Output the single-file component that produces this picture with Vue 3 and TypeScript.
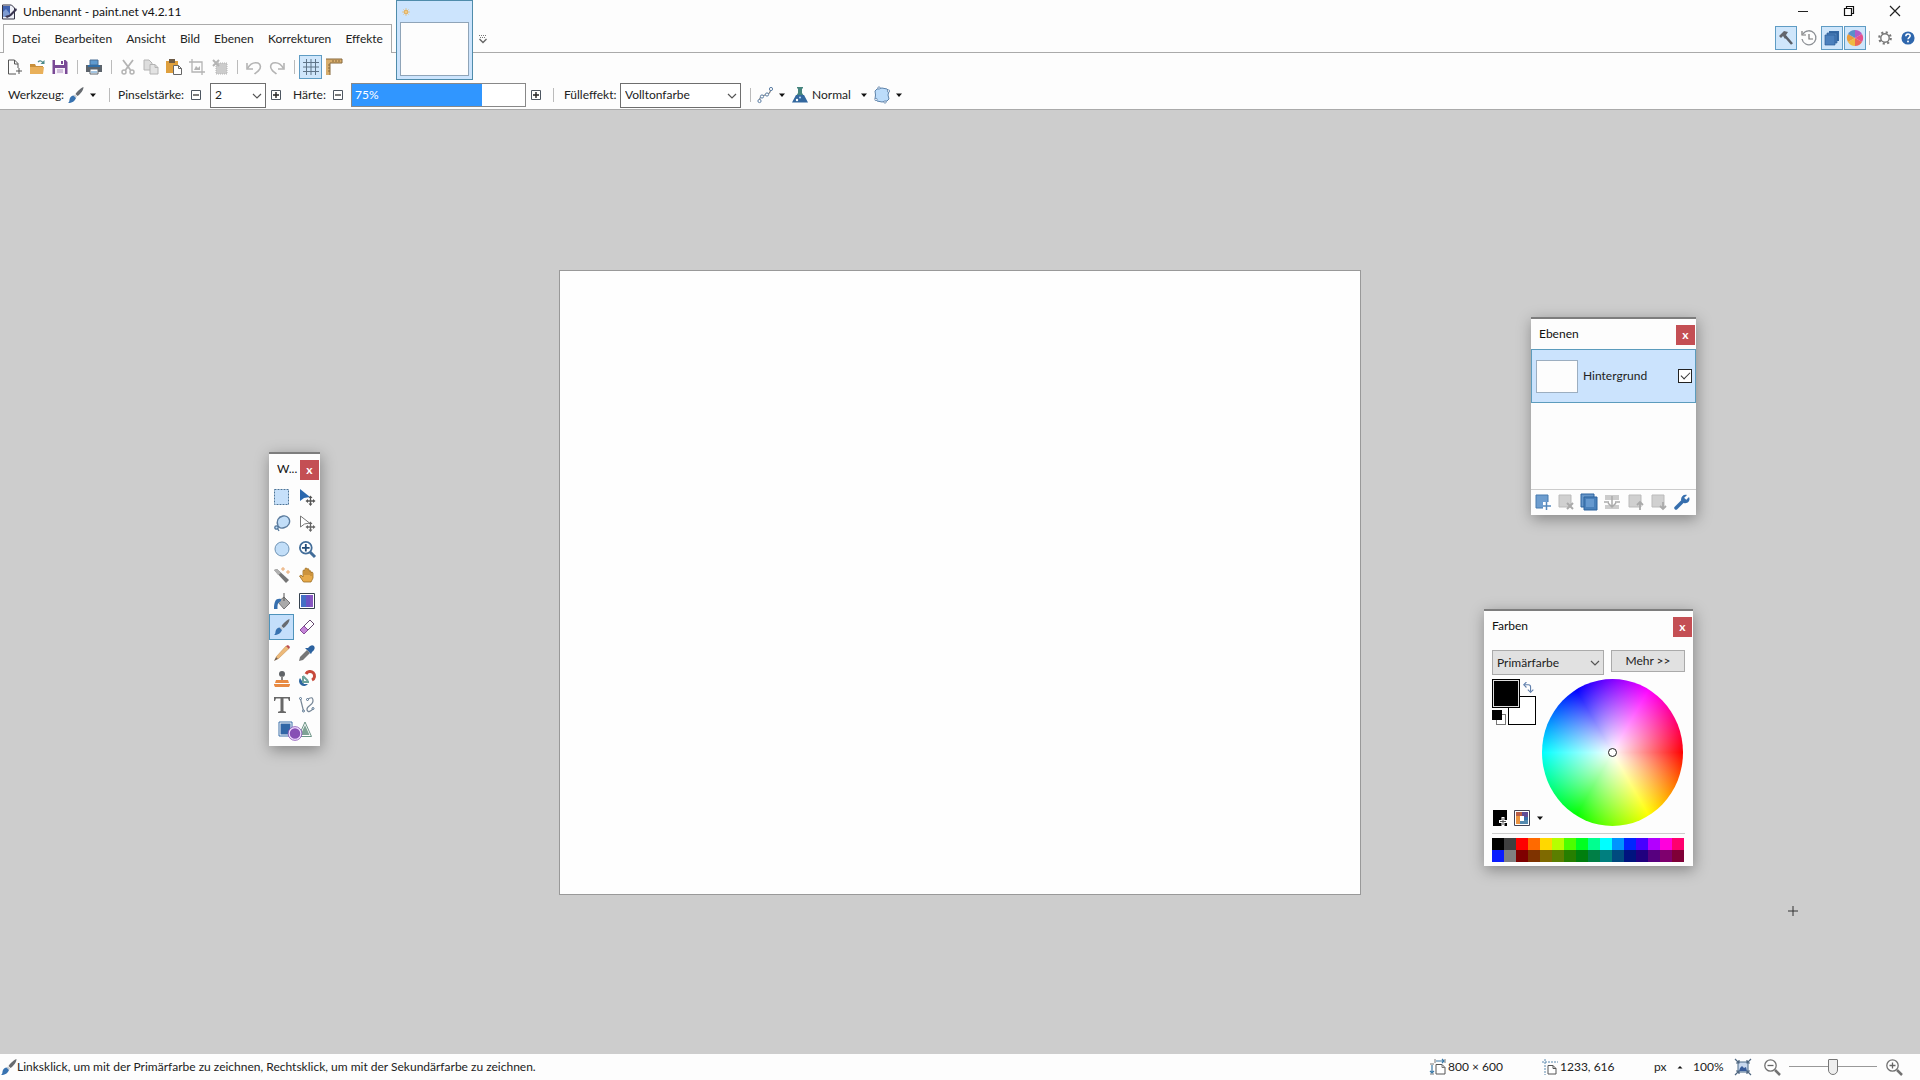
<script setup lang="ts">
import { ref } from 'vue'

const g = '#b4b4b4'
const icons: Record<string, string> = {
  app: '<path d="M1.5 1h9l3 3v11h-12z" fill="#eef0f8" stroke="#334"/><path d="M2 2h7v8H2z" fill="#3f62b0"/><path d="M2 8l3-3 4 5v3H2z" fill="#7e9bd2"/><path d="M15 4L8 11l-4 1 2 2 4-2 6-6z" fill="#3a3550"/>',
  new: '<path d="M12 9V4.500L8.500 1H2.500v14H10" fill="none" stroke="#555"/><path d="M8.500 1v4H12M13 9v6M10 12h6" fill="none" stroke="#555"/>',
  open: '<path d="M1 5h5l1 2h7v8H1z" fill="#c88f3a"/><path d="M1 8h14l-1 7H1z" fill="#e9b05a"/><path d="M9 3c2-2 4-1 5 1" fill="none" stroke="#4d8a8a" stroke-width="1.200"/><path d="M15.500 1v4h-4z" fill="#4d8a8a"/>',
  save: '<path d="M.5 1h13l2 2v12H.5z" fill="#7a4a96"/><path d="M3 1h9v5H3z" fill="#fff"/><path d="M9 2h2v3H9z" fill="#7a4a96"/><path d="M3 9h10v6H3z" fill="#f8f2fb"/><path d="M5 11h6M5 13h6" stroke="#a98bbb"/>',
  print: '<path d="M4 1h8v5H4z" fill="#5f9bd0" stroke="#4a6f94"/><path d="M0 6h16v7H0z" fill="#5d646c"/><path d="M2 6h12v2H2z" fill="#2f6ea8"/><path d="M4 10h8v5H4z" fill="#fff" stroke="#5d646c"/><path d="M5 13h6" stroke="#4a8bc4"/>',
  cut: `<path d="M3 1l7.500 10M13 1L5.500 11" stroke="${g}" stroke-width="1.800"/><circle cx="4" cy="13" r="2" fill="none" stroke="${g}" stroke-width="1.500"/><circle cx="12" cy="13" r="2" fill="none" stroke="${g}" stroke-width="1.500"/>`,
  copy: `<path d="M1 1h5l3 3v7H1z" fill="#ddd" stroke="${g}"/><path d="M7 5.500h5l3 3V15H7z" fill="#e3e3e3" stroke="${g}"/><path d="M12 5.500v3h3" fill="none" stroke="${g}"/>`,
  paste: '<path d="M0 2h12v12H0z" fill="#dfa03e"/><path d="M3 0h6v4H3z" fill="#6d5a44"/><path d="M7.500 6.500h5l3 3v6h-8z" fill="#fff" stroke="#666"/><path d="M12.500 6.500v3h3" fill="none" stroke="#666"/>',
  crop: `<path d="M3 0v13h13M0 3h13v13" fill="none" stroke="${g}" stroke-width="1.300"/><path d="M5 11l2-4 2 2 2-2v4z" fill="${g}"/>`,
  deselect: `<path d="M4 4h11v11H4z" fill="#ccc" stroke="${g}" stroke-dasharray="1 1"/><path d="M1 1l6 6M7 1L1 7" stroke="${g}" stroke-width="2"/>`,
  undo: `<path d="M1.500 9.500C4 5 8 3 12 4c3 1 3 5 1 7-1 1.500-3 2.500-4.500 4" fill="none" stroke="${g}" stroke-width="1.600"/><path d="M1 4v6h6" fill="none" stroke="${g}" stroke-width="1.600"/>`,
  redo: `<path d="M14.500 9.500C12 5 8 3 4 4 1 5 1 9 3 11c1 1.500 3 2.500 4.500 4" fill="none" stroke="${g}" stroke-width="1.600"/><path d="M15 4v6H9" fill="none" stroke="${g}" stroke-width="1.600"/>`,
  grid: '<path d="M3.500 0v16M8 0v16M12.500 0v16M0 3.500h16M0 8h16M0 12.500h16" stroke="#5f7488"/>',
  ruler: '<path d="M0 0h16v4H4v12H0z" fill="#d8ad6c"/><path d="M0 0h16v4M4 16V4h12M4 6H2m2 3H2m2 3H2M7 3V1m3 2V1m3 2V1" fill="none" stroke="#86683c"/>',
  brush: '<path d="M15.500 0c-3 1-7 5-8 7l2 2c3-2 6-6 6-9z" fill="#676b70"/><path d="M7 7.500L9 9.500 8 11 5.500 8.500z" fill="#c9ccd0"/><path d="M5.500 8.500L8 11c-1 3-4 5-8 5 2-1 1-3 2-5 .8-1.500 2-2.500 3.500-2.500z" fill="#3772b0"/>',
  minus: '<path d="M3.500 3.500h9v9h-9z" fill="#fff" stroke="#4d5661"/><path d="M5 8h6" stroke="#222" stroke-width="1.200"/>',
  plus: '<path d="M3.500 3.500h9v9h-9z" fill="#fff" stroke="#4d5661"/><path d="M5 8h6M8 5v6" stroke="#222" stroke-width="1.400"/>',
  curve: '<path d="M2.500 13C3 8 6 9 8 8s5 0 5.500-5" fill="none" stroke="#777" stroke-width="1.200"/><g fill="#fff" stroke="#5c7ea4"><circle cx="2.500" cy="14" r="1.600"/><circle cx="5" cy="9.500" r="1.600"/><circle cx="10" cy="7.500" r="1.600"/><circle cx="14" cy="2" r="1.600"/></g>',
  flask: '<path d="M5 0h6v1.500h-1V6l2 3H4l2-3V1.500H5z" fill="#45847d"/><path d="M4 8h8l4 7.500H0z" fill="#33689f"/><circle cx="5" cy="13" r="1.200" fill="#fff"/><circle cx="8" cy="10.500" r="1" fill="#b9dafa"/>',
  blob: '<path d="M3 2q5-2 10 0 1 1 2 2-2 4 0 8l-2 2q-5 2-10 0l-2-2Q2 8 1 4z" fill="#bcdcfa" stroke="#5d82a9"/><g fill="#fff" stroke="#5d82a9" stroke-width=".8"><circle cx="5" cy="1" r="1.200"/><circle cx="14.500" cy="4" r="1.200"/><circle cx="2" cy="12.500" r="1.200"/><circle cx="11" cy="15" r="1.200"/></g>',
  hammer: '<path d="M1 6l5-5 4 1-2 3 1 2-2 2-2-3-2 2z" fill="#63666c"/><path d="M7.500 6.500l6.500 7.500" stroke="#5b6069" stroke-width="2.600"/>',
  clock: '<path d="M2 4a7 7 0 1 1-1 5" fill="none" stroke="#8b8f94" stroke-width="1.300"/><path d="M1 1v4h4M8 4v5h4" fill="none" stroke="#777" stroke-width="1.200"/>',
  layers: '<path d="M5 1h10v10H5z" fill="#3468a4"/><path d="M3 3h10v10H3z" fill="#4b7fb9" stroke="#2b5c98" stroke-width=".7"/><path d="M1 5h10v10H1z" fill="#4b80bd" stroke="#2b5c98" stroke-width=".7"/>',
  colors: '<path d="M8 8V0a8 8 0 0 1 7 4z" fill="#b15cc6"/><path d="M8 8l7-4a8 8 0 0 1 0 8z" fill="#e54f8d"/><path d="M8 8l7 4a8 8 0 0 1-7 4z" fill="#ed6757"/><path d="M8 8v8a8 8 0 0 1-7-4z" fill="#efba42"/><path d="M8 8l-7 4a8 8 0 0 1 0-8z" fill="#eb9b39"/><path d="M8 8L1 4a8 8 0 0 1 7-4z" fill="#588fc9"/>',
  gear: '<circle cx="8" cy="8" r="4.800" fill="none" stroke="#777" stroke-width="1.600"/><circle cx="8" cy="8" r="6.600" fill="none" stroke="#777" stroke-width="2.400" stroke-dasharray="2.400 2.784"/>',
  help: '<circle cx="8" cy="8" r="7.500" fill="#2f67ad"/><path d="M5.500 6c0-3.500 5-3.500 5-.5 0 2-2.500 2-2.500 4" fill="none" stroke="#fff" stroke-width="1.700"/><circle cx="8" cy="12" r="1.100" fill="#fff"/>',
  rect: '<path d="M.5 .5h14v15H.5z" fill="#c6e0fa"/><path d="M.5 .5h14v15H.5z" fill="none" stroke="#4c7499" stroke-dasharray="2 1"/>',
  move: '<path d="M1 0v12l4-3 6-1z" fill="#2b68ae"/><path d="M11.500 8v8M8 12h7" stroke="#555" stroke-width="1.300"/><path d="M11.500 6.500l2 2.500h-4zm0 10.500l2-2.500h-4zM6.500 12L9 10v4zm10 0L14 10v4z" fill="#555"/>',
  movesel: '<path d="M1.500 1v11l4-3 5-1z" fill="#fff" stroke="#777"/><path d="M11.500 8v8M8 12h7" stroke="#666" stroke-width="1.300"/><path d="M11.500 6.500l2 2.500h-4zm0 10.500l2-2.500h-4zM6.500 12L9 10v4zm10 0L14 10v4z" fill="#666"/>',
  lasso: '<path d="M4 11C2 6 4 2 9 1s8 4 6 8-8 5-10 3z" fill="#c2def8" stroke="#5c7c9e" stroke-width="1.300"/><circle cx="2.500" cy="12.500" r="1.700" fill="#c2def8" stroke="#50759a" stroke-width="1.300"/><path d="M3.500 13.500L5 16" stroke="#50759a" stroke-width="1.300"/>',
  ellipse: '<circle cx="8" cy="8" r="7" fill="#c2def8" stroke="#6e93b5"/>',
  zoom: '<circle cx="6.800" cy="6.800" r="5.900" fill="#fff" stroke="#426d99" stroke-width="1.800"/><path d="M11 11l5 5" stroke="#426d99" stroke-width="3"/><path d="M6.800 3v7.600M3 6.800h7.600" stroke="#234c78" stroke-width="1.800"/>',
  wand: '<path d="M0 3l3-1 12 11-3 3z" fill="#757575"/><path d="M0 3l3-1 4 4-3 2z" fill="#b0b0b0"/><path d="M9 0v4M7 2h4M14 3v4M12 5h4" stroke="#e9a86f"/>',
  hand: '<path d="M4.500 15L.5 9 2 8l2 2V3.500q1-1 2 0V1.500q1-1 2 0v.5q2-1 2 1v1q2-1 2 1v.5q2-1 2 1V11l-2 4z" fill="#e7aa4a" stroke="#9b6c25" stroke-width=".8"/><path d="M6 3.500V8M8 2v6M10 3.500V8M12 5v4" stroke="#9b6c25" stroke-width=".7"/>',
  bucket: '<path d="M4 9l6-5 6 6-6 6z" fill="#aaa" stroke="#777"/><path d="M10 0v8" stroke="#555"/><path d="M7 6C2 5 0 8 0 16h3.500c0-5 0-6 3.500-8z" fill="#366fae"/>',
  gradient: '<path d="M.5.500h15v15H.5z" fill="#fff" stroke="#34414f"/><path d="M2 2h12v12H2z" fill="#6b54c4"/><path d="M2 2h5v12H2z" fill="#436fc5"/><path d="M11 2h3v12h-3z" fill="#8857c2"/>',
  eraser: '<path d="M1 11L11 1l4 4L5 15z" fill="#fff" stroke="#65486f"/><path d="M1 11l4-4 4 4-4 4z" fill="#c485d7" stroke="#874b9b"/>',
  pencil: '<path d="M2 12L12 1l3 2.500L4 14z" fill="#edb979" stroke="#bf8a4c" stroke-width=".5"/><path d="M12 1l2-1 2 2-1 2z" fill="#bb4c50"/><path d="M2 12l2 2-4 2z" fill="#765e48"/>',
  picker: '<path d="M9 3q3-4 6-2 2 3-2 6l-1 2-6-6z" fill="#2c629f"/><path d="M8 5l3 3-7 7-4 1 1-4z" fill="#777"/>',
  stamp: '<circle cx="8" cy="3" r="3" fill="#606468"/><path d="M7 5h2v4H7z" fill="#888"/><path d="M2 9h12l1 3H1zM0 13h16v1l-1 2H1l-1-2z" fill="#e88a42"/>',
  recolor: '<path d="M1 7a5 5 0 1 0 8 6l-4 0z" fill="#2e67a0"/><path d="M7 3a4.500 4.500 0 1 1 6 6" fill="none" stroke="#c7493b" stroke-width="3"/><path d="M4 5v6h6M9 10L4 5" fill="none" stroke="#6ca29b" stroke-width="2"/>',
  text: '<path d="M0 0h16v4h-1l-1-2.500H9.500V14l2.500.8V16H4v-1.200l2.500-.8V1.500H2L1 4H0z" fill="#686868"/>',
  line: '<path d="M1.500 2l3 12M8 3q6-5 6 1c0 5-7 4-6 9 1 3 4 1 6-1" fill="none" stroke="#778797" stroke-width="1.200"/><g fill="#fff" stroke="#55728f"><circle cx="1.500" cy="1.500" r="1"/><circle cx="4.500" cy="14" r="1"/><circle cx="8.500" cy="2.500" r="1"/><circle cx="14" cy="11.500" r="1"/></g>',
  shapes: '<path d="M1 1h13v14H1z" fill="#fff" stroke="#3a6ea8"/><path d="M2.500 2.500h10v11h-10z" fill="#3267a7"/><path d="M27 1l6.500 14.500h-13z" fill="#fff" stroke="#6c9486"/><path d="M27 4l4.500 10h-9z" fill="#7fa395"/><circle cx="17" cy="12.500" r="6" fill="#874fb5" stroke="#f0ddff" stroke-width="1.500"/><circle cx="17" cy="12.500" r="6.900" fill="none" stroke="#874fb5" stroke-width=".8"/>',
  addlayer: '<path d="M1 1h12v13H1z" fill="#6d9dcf" stroke="#477aaf"/><path d="M8 8h8v8H8z" fill="#fff"/><path d="M11.500 8v8M8 12h8" stroke="#5689bd" stroke-width="1.500"/>',
  dellayer: '<path d="M1 1h12v12H1z" fill="#d0d0d0" stroke="#bbb"/><path d="M9 9l6 6M15 9l-6 6" stroke="#aaa" stroke-width="2"/>',
  duplayer: '<path d="M0 0h13v13H0z" fill="#6797ca" stroke="#2c629d"/><path d="M3 3h13v13H3z" fill="#4980ba" stroke="#2c629d"/><path d="M5 5h8v8H5z" fill="#6699cf"/>',
  merge: '<path d="M1 1h14v5H1zM1 11h14v4H1z" fill="#ccc"/><path d="M8 2v11M4 9l4 4 4-4M0 8h5M11 8h5" fill="none" stroke="#aaa" stroke-width="1.500"/>',
  up: '<path d="M1 1h12v12H1z" fill="#d0d0d0" stroke="#bbb"/><path d="M12 16V9M9 11l3-3 3 3" fill="none" stroke="#aaa" stroke-width="1.800"/>',
  down: '<path d="M1 1h12v12H1z" fill="#d0d0d0" stroke="#bbb"/><path d="M12 8v7M9 12l3 3 3-3" fill="none" stroke="#aaa" stroke-width="1.800"/>',
  wrench: '<path d="M2 14l8-8" stroke="#376fae" stroke-width="3.500" stroke-linecap="round"/><path d="M10 9L7 6c0-4 3-6 6-5l-3 3 2 2 3-3c2 4-2 7-5 6z" fill="#376fae"/>',
  swap: '<path d="M2 4h6q3 0 3 3v7" fill="none" stroke="#607fac" stroke-width="1.600"/><path d="M5 0L1 4l4 4M7 11l4 4 4-4" fill="none" stroke="#607fac" stroke-width="1.600"/>',
  addcolor: '<path d="M1 0h14v16H1z" fill="#000"/><path d="M11 7v9M7 11.500h9" stroke="#fff" stroke-width="3"/><path d="M11 8v7M8 11.500h6" stroke="#555"/>',
  palette: '<path d="M.5.500h15v15H.5z" fill="#fff" stroke="#445"/><path d="M2 2h6v4H2z" fill="#ba5e46"/><path d="M8 2h6v6H8z" fill="#614c95"/><path d="M2 6h4v8H2z" fill="#ec9441"/><path d="M6 10h8v4H6z" fill="#5489ae"/><path d="M10 7h4v3h-4z" fill="#386eaa"/><path d="M6 6h4v5H6z" fill="#fff"/>',
  size: '<path d="M6 5.500h6l3 3V15H6z" fill="#fff" stroke="#555"/><path d="M12 5.500v3h3M0 5h4M0 15h4M5 0v4M15 0v4" fill="none" stroke="#777"/><path d="M2 6v8M0 12l2 2 2-2M6 2h8M12 0l2 2-2 2" fill="none" stroke="#3979a8" stroke-width="1.200"/>',
  pos: '<path d="M3 0v16M0 3h16" stroke="#5a88ad" stroke-dasharray="2 1"/><path d="M6 6.500h5l3 3V15H6z" fill="#fff" stroke="#555"/><path d="M11 6.500v3h3" fill="none" stroke="#555"/>',
  fit: '<path d="M3 3h10v10H3z" fill="#c8d8ee" stroke="#496988"/><path d="M4 12l1-3 2-2 2 2 2-1 1 4z" fill="#365a99"/><path d="M0 0l4 4M16 0l-4 4M0 16l4-4M16 16l-4-4M1 4h3V1M12 1v3h3M1 12h3v3M12 15v-3h3" fill="none" stroke="#4e6680" stroke-width="1.200"/>',
  zoomout: '<circle cx="6.500" cy="6.500" r="5.700" fill="#fff" stroke="#727272" stroke-width="1.300"/><path d="M11 11l5 5" stroke="#727272" stroke-width="2.500"/><path d="M3.500 6.500h6" stroke="#666" stroke-width="1.300"/>',
  zoomin: '<circle cx="6.500" cy="6.500" r="5.700" fill="#fff" stroke="#727272" stroke-width="1.300"/><path d="M11 11l5 5" stroke="#727272" stroke-width="2.500"/><path d="M3.500 6.500h6M6.500 3.500v6" stroke="#666" stroke-width="1.300"/>',
  min: '<path d="M3 8.500h10" stroke="#222"/>',
  restore: '<path d="M3.500 5.500h7v7h-7zM5.500 5V3.500h7v7H11" fill="none" stroke="#111" stroke-width="1.200"/>',
  close: '<path d="M3 3l10 10M13 3L3 13" stroke="#222" stroke-width="1.200"/>',
  caret: '<path d="M5 6.500h6L8 10z" fill="#111"/>',
  caretup: '<path d="M5.500 9.500h5L8 7z" fill="#111"/>',
  doclist: '<path d="M4.500 8L8 11.500 11.500 8" fill="none" stroke="#666" stroke-width="1.400"/><path d="M4 4.500h8M5 6.500h6" stroke="#777" stroke-dasharray="1 1"/>',
  star: '<path d="M8 2v12M2 8h12M4 4l8 8M12 4l-8 8" stroke="#e9b45e" stroke-width="1.300"/><circle cx="8" cy="8" r="2.500" fill="#f8d28c" stroke="#dc9d3e"/>',
  chevron: '<path d="M4 6l4 4 4-4" fill="none" stroke="#555" stroke-width="1.200"/>',
  cross: '<path d="M8 3v10M3 8h10" stroke="#333"/>',
}

const menus = ['Datei', 'Bearbeiten', 'Ansicht', 'Bild', 'Ebenen', 'Korrekturen', 'Effekte']
const toolbar = ['new', 'open', 'save', '|', 'print', '|', 'cut', 'copy', 'paste', 'crop', 'deselect', '|', 'undo', 'redo', '|', 'grid', 'ruler']
const tools = ['rect', 'move', 'lasso', 'movesel', 'ellipse', 'zoom', 'wand', 'hand', 'bucket', 'gradient', 'brush', 'eraser', 'pencil', 'picker', 'stamp', 'recolor', 'text', 'line']
const layerActions = ['addlayer', 'dellayer', 'duplayer', 'merge', 'up', 'down', 'wrench']
const swatches = [
  '#000000', '#404040', '#ff0000', '#ff6a00', '#ffd800', '#b6ff00', '#4cff00', '#00ff21', '#00ff90', '#00ffff', '#0094ff', '#0026ff', '#4800ff', '#b200ff', '#ff00dc', '#ff006e',
  '#0a1cff', '#808080', '#7f0000', '#7f3300', '#7f6a00', '#5b7f00', '#267f00', '#007f0e', '#007f46', '#007f7f', '#004a7f', '#00137f', '#21007f', '#57007f', '#7f006e', '#7f0037',
]

const tool = ref('brush')
const brushSize = ref('2')
const hardness = ref(75)
const fill = ref('Volltonfarbe')
const slot = ref('Primärfarbe')
const layerVisible = ref(true)
const zoomLevel = ref(50)
</script>

<template>
  <div class="app">
    <header class="top">
      <div class="titlebar">
        <svg class="icon" viewBox="0 0 16 16" v-html="icons.app" />
        <h1>Unbenannt - paint.net v4.2.11</h1>
        <div class="window-buttons">
          <button v-for="n in ['min', 'restore', 'close']" :key="n" :aria-label="n">
            <svg class="icon" viewBox="0 0 16 16" v-html="icons[n]" />
          </button>
        </div>
      </div>

      <div class="menurow">
        <nav class="menu">
          <button v-for="m in menus" :key="m">{{ m }}</button>
        </nav>
        <button class="doclist" aria-label="Bilderliste"><svg class="icon" viewBox="0 0 16 16" v-html="icons.doclist" /></button>
        <div class="panels">
          <button class="tb on" aria-label="Werkzeuge"><svg class="icon" viewBox="0 0 16 16" v-html="icons.hammer" /></button>
          <button class="tb" aria-label="Verlauf"><svg class="icon" viewBox="0 0 16 16" v-html="icons.clock" /></button>
          <button class="tb on" aria-label="Ebenen"><svg class="icon" viewBox="0 0 16 16" v-html="icons.layers" /></button>
          <button class="tb on" aria-label="Farben"><svg class="icon" viewBox="0 0 16 16" v-html="icons.colors" /></button>
          <span class="sep" />
          <button class="tb" aria-label="Einstellungen"><svg class="icon small" viewBox="0 0 16 16" v-html="icons.gear" /></button>
          <button class="tb" aria-label="Hilfe"><svg class="icon small" viewBox="0 0 16 16" v-html="icons.help" /></button>
        </div>
      </div>

      <div class="toolbar">
        <template v-for="(n, i) in toolbar" :key="i">
          <span v-if="n === '|'" class="sep" />
          <button v-else class="tb" :class="{ on: n === 'grid' }" :aria-label="n">
            <svg class="icon" viewBox="0 0 16 16" v-html="icons[n]" />
          </button>
        </template>
      </div>

      <div class="options">
        <span class="l-tool">Werkzeug:</span>
        <button class="pick" aria-label="Werkzeug">
          <svg class="icon" viewBox="0 0 16 16" v-html="icons.brush" />
          <svg class="icon" viewBox="0 0 16 16" v-html="icons.caret" />
        </button>
        <span class="sep" />
        <label class="l-size" for="size">Pinselstärke:</label>
        <button class="step" aria-label="Kleiner"><svg class="icon" viewBox="0 0 16 16" v-html="icons.minus" /></button>
        <span class="select size">
          <select id="size" v-model="brushSize"><option>2</option><option>3</option></select>
          <svg class="icon" viewBox="0 0 16 16" v-html="icons.chevron" />
        </span>
        <button class="step" aria-label="Größer"><svg class="icon" viewBox="0 0 16 16" v-html="icons.plus" /></button>
        <label class="l-hard" for="hard">Härte:</label>
        <button class="step" aria-label="Weicher"><svg class="icon" viewBox="0 0 16 16" v-html="icons.minus" /></button>
        <span class="hardness">
          <span class="fill" :style="{ width: hardness + '%' }" />
          <input id="hard" v-model="hardness" type="range" min="0" max="100">
          <output for="hard">{{ hardness }}%</output>
        </span>
        <button class="step" aria-label="Härter"><svg class="icon" viewBox="0 0 16 16" v-html="icons.plus" /></button>
        <span class="sep wide" />
        <label class="l-fill" for="fill">Fülleffekt:</label>
        <span class="select fillsel">
          <select id="fill" v-model="fill"><option>Volltonfarbe</option></select>
          <svg class="icon" viewBox="0 0 16 16" v-html="icons.chevron" />
        </span>
        <span class="sep wide" />
        <button class="pick" aria-label="Kantenglättung">
          <svg class="icon" viewBox="0 0 16 16" v-html="icons.curve" />
          <svg class="icon" viewBox="0 0 16 16" v-html="icons.caret" />
        </button>
        <button class="pick blend">
          <svg class="icon" viewBox="0 0 16 16" v-html="icons.flask" />
          <span>Normal</span>
          <svg class="icon" viewBox="0 0 16 16" v-html="icons.caret" />
        </button>
        <button class="pick" aria-label="Auswahlmodus">
          <svg class="icon" viewBox="0 0 16 16" v-html="icons.blob" />
          <svg class="icon" viewBox="0 0 16 16" v-html="icons.caret" />
        </button>
      </div>

      <button class="doc-tab" aria-label="Unbenannt">
        <svg class="star" viewBox="0 0 16 16" v-html="icons.star" />
        <span class="doc-thumb" />
      </button>
    </header>

    <main class="workspace">
      <div class="canvas" />

      <section class="win tools">
        <div class="win-title"><h2>W...</h2><button class="x" aria-label="Schließen">x</button></div>
        <div class="tool-grid">
          <button v-for="t in tools" :key="t" :class="{ on: tool === t }" :aria-label="t" @click="tool = t">
            <svg class="icon" viewBox="0 0 16 16" v-html="icons[t]" />
          </button>
          <button class="wide" aria-label="shapes"><svg class="shapes" viewBox="0 0 34 20" v-html="icons.shapes" /></button>
        </div>
      </section>

      <section class="win layers">
        <div class="win-title"><h2>Ebenen</h2><button class="x" aria-label="Schließen">x</button></div>
        <label class="layer">
          <span class="layer-thumb" />
          <span class="layer-name">Hintergrund</span>
          <input v-model="layerVisible" type="checkbox">
        </label>
        <div class="layer-space" />
        <div class="layer-actions">
          <button v-for="a in layerActions" :key="a" :aria-label="a"><svg class="icon" viewBox="0 0 16 16" v-html="icons[a]" /></button>
        </div>
      </section>

      <section class="win colors">
        <div class="win-title"><h2>Farben</h2><button class="x" aria-label="Schließen">x</button></div>
        <div class="color-head">
          <span class="select slot">
            <select v-model="slot" aria-label="Farbe"><option>Primärfarbe</option><option>Sekundärfarbe</option></select>
            <svg class="icon" viewBox="0 0 16 16" v-html="icons.chevron" />
          </span>
          <button class="more">Mehr &gt;&gt;</button>
        </div>
        <div class="color-body">
          <div class="color-left">
            <div class="wells">
              <span class="secondary" />
              <span class="primary" />
              <span class="mini-white" />
              <span class="mini-black" />
              <svg class="swap" viewBox="0 0 16 16" v-html="icons.swap" />
            </div>
            <div class="color-tools">
              <button aria-label="Farbe hinzufügen"><svg class="icon" viewBox="0 0 16 16" v-html="icons.addcolor" /></button>
              <button class="pal" aria-label="Palette">
                <svg class="icon" viewBox="0 0 16 16" v-html="icons.palette" />
                <svg class="icon" viewBox="0 0 16 16" v-html="icons.caret" />
              </button>
            </div>
          </div>
          <div class="wheel"><span class="marker" /></div>
        </div>
        <div class="swatches">
          <span v-for="(c, i) in swatches" :key="i" :style="{ background: c }" />
        </div>
      </section>

      <svg class="cursor" viewBox="0 0 16 16" v-html="icons.cross" />
    </main>

    <footer class="status">
      <svg class="icon" viewBox="0 0 16 16" v-html="icons.brush" />
      <span class="hint">Linksklick, um mit der Primärfarbe zu zeichnen, Rechtsklick, um mit der Sekundärfarbe zu zeichnen.</span>
      <svg class="icon" viewBox="0 0 16 16" v-html="icons.size" />
      <span class="s-size">800 × 600</span>
      <svg class="icon" viewBox="0 0 16 16" v-html="icons.pos" />
      <span class="s-pos">1233, 616</span>
      <button class="unit">px <svg class="icon" viewBox="0 0 16 16" v-html="icons.caretup" /></button>
      <span class="s-zoom">100%</span>
      <button class="fit" aria-label="Einpassen"><svg class="icon" viewBox="0 0 16 16" v-html="icons.fit" /></button>
      <button aria-label="Verkleinern"><svg class="icon" viewBox="0 0 16 16" v-html="icons.zoomout" /></button>
      <input v-model="zoomLevel" class="zoom" type="range" min="0" max="100" aria-label="Zoom">
      <button aria-label="Vergrößern"><svg class="icon" viewBox="0 0 16 16" v-html="icons.zoomin" /></button>
    </footer>
  </div>
</template>

<style>
body { margin: 0; overflow: hidden; }
</style>

<style scoped>
.app {
  display: flex;
  flex-direction: column;
  height: 100vh;
  background: #fdfdfd;
  color: #222;
  font: 12px/16px Lato, "Open Sans", sans-serif;
}
.app *, .app *::before { box-sizing: border-box; }
button {
  display: flex;
  align-items: center;
  justify-content: center;
  padding: 0;
  border: 0;
  background: none;
  color: inherit;
  font: inherit;
  white-space: nowrap;
}
h1, h2 { margin: 0; font: inherit; color: #111; }
.icon { flex: none; display: block; width: 16px; height: 16px; overflow: visible; }
.icon.small { width: 14px; height: 14px; }
.sep { flex: none; width: 11px; height: 14px; }
.sep::before { content: ""; display: block; width: 1px; height: 14px; margin-left: 6px; background: #bbb; }

.top { position: relative; flex: none; border-bottom: 1px solid #aaa; }
.titlebar { display: flex; align-items: center; height: 24px; padding-left: 1px; }
.titlebar h1 { margin-left: 6px; }
.window-buttons { display: flex; margin-left: auto; padding-right: 2px; align-self: flex-start; }
.window-buttons button { width: 46px; height: 21px; }

.menurow { display: flex; height: 29px; box-shadow: inset 0 -1px #aaa; padding-left: 3px; }
.menu {
  display: flex;
  justify-content: space-between;
  width: 389px;
  padding: 0 8px;
  border: 1px solid #aaa;
  border-bottom: 0;
  background: #fdfdfd;
}
.doclist { width: 16px; margin-left: 83px; }
.panels { display: flex; align-items: center; gap: 1px; margin-left: auto; padding: 0 1px 2px 0; }
.panels .sep { width: 6px; }
.panels .sep::before { margin-left: 2px; }
.tb { flex: none; width: 23px; height: 24px; border: 1px solid transparent; }
.panels .tb { width: 22px; }
.tb.on { background: #cfe6fb; border-color: #5f9cc4; }

.toolbar { display: flex; align-items: center; height: 28px; padding-left: 2px; }
.options { display: flex; align-items: center; height: 28px; padding-left: 8px; }
.l-tool { width: 60px; }
.l-size { width: 70px; margin-left: 4px; }
.l-hard { width: 37px; margin-left: 9px; }
.l-fill { width: 56px; margin-left: 4px; }
.pick { margin-right: 2px; }
.pick .icon + .icon { margin-left: 1px; }
.step { width: 16px; height: 22px; }
.sep.wide { width: 16px; padding-left: 3px; }
.size { width: 56px; margin: 0 2px 0 6px; }
.fillsel { width: 121px; }
.blend span { width: 44px; margin-left: 4px; text-align: left; }

.select { position: relative; display: flex; height: 25px; }
.select select {
  appearance: none;
  width: 100%;
  padding: 0 20px 0 4px;
  border: 1px solid #6e6e6e;
  border-radius: 0;
  background: #fff;
  color: #222;
  font: inherit;
}
.select .icon { position: absolute; right: 1px; top: 5px; pointer-events: none; }

.hardness { position: relative; width: 175px; height: 24px; margin: 0 2px 0 5px; border: 1px solid #888; background: #fff; }
.hardness .fill { display: block; height: 100%; background: #3096ff; }
.hardness input { position: absolute; inset: 0; width: 100%; height: 100%; margin: 0; opacity: 0; }
.hardness output { position: absolute; left: 3px; top: 3px; color: #fff; pointer-events: none; }

.doc-tab {
  position: absolute;
  left: 396px;
  top: 0;
  flex-direction: column;
  align-items: stretch;
  justify-content: flex-start;
  width: 77px;
  height: 80px;
  padding: 4px 3px 3px;
  border: 1px solid #4f8cab;
  background: #cce4fd;
}
.star { width: 10px; height: 10px; margin: 2px 0 5px 1px; }
.doc-thumb { flex: 1; border: 1px solid #8fa4b8; background: #fdfdfd; }

.workspace {
  position: relative;
  flex: 1;
  display: flex;
  align-items: center;
  justify-content: center;
  background: #cdcdcd;
}
.canvas { width: 802px; height: 625px; border: 1px solid #999; background: #fefefe; }

.win { position: absolute; background: #fdfdfd; border-top: 2px solid #7d7d7d; box-shadow: 1px 4px 14px rgba(0, 0, 0, .35); }
.win-title { display: flex; justify-content: space-between; padding: 6px 1px 0 8px; }
.win-title h2 { line-height: 18px; }
.x { width: 19px; height: 20px; background: #c44f54; color: #fff; font-weight: 700; }

.tools { left: 269px; top: 342px; width: 51px; padding-bottom: 2px; }
.tool-grid { display: grid; grid-template-columns: 25px 25px; grid-auto-rows: 26px; padding: 4px 0 0 0; }
.tool-grid button { border: 1px solid transparent; }
.tool-grid .on { background: #c4dffb; border-color: #4f93bb; }
.tool-grid .wide { grid-column: span 2; }
.shapes { width: 34px; height: 20px; margin-left: 2px; }

.layers { right: 224px; top: 207px; width: 165px; }
.layer {
  display: flex;
  align-items: center;
  height: 54px;
  margin-top: 4px;
  padding: 0 3px 0 4px;
  border: 1px solid #5c9cbd;
  background: #cbe3fd;
}
.layer-thumb { width: 42px; height: 33px; border: 1px solid #9caec0; background: #fdfdfd; }
.layer-name { flex: 1; margin-left: 5px; }
.layer input { appearance: none; width: 14px; height: 14px; margin: 0; border: 1px solid #222; background: #fff; }
.layer input:checked::before {
  content: "";
  display: block;
  width: 9px;
  height: 5px;
  margin: 2px 0 0 2px;
  border: solid #333;
  border-width: 0 0 1px 1px;
  rotate: -45deg;
}
.layer-space { height: 86px; }
.layer-actions { display: flex; justify-content: space-between; padding: 4px 6px 5px 4px; border-top: 1px solid #ccc; }

.colors { right: 227px; top: 499px; width: 209px; padding-bottom: 4px; }
.color-head { display: flex; align-items: flex-start; gap: 7px; padding: 13px 8px 0; }
.slot { width: 112px; }
.slot select { background: #e1e1e1; border-color: #aaa; }
.more { flex: 1; height: 22px; border: 1px solid #aaa; background: #e1e1e1; }
.color-body { display: flex; justify-content: space-between; margin: 4px 8px 0; padding-bottom: 7px; border-bottom: 1px solid #ccc; }
.color-left { display: flex; flex-direction: column; justify-content: space-between; width: 50px; }
.wells { position: relative; width: 48px; height: 48px; }
.wells span { position: absolute; border: 1px solid #000; background: #fff; }
.wells .primary { left: 0; top: 0; width: 28px; height: 29px; background: #000; box-shadow: inset 0 0 0 1px #ddd; }
.wells .secondary { left: 16px; top: 17px; width: 28px; height: 29px; }
.wells .mini-black { left: 0; top: 31px; width: 10px; height: 10px; background: #000; }
.wells .mini-white { left: 4px; top: 35px; width: 10px; height: 11px; border-color: #777; }
.swap { position: absolute; left: 31px; top: 3px; width: 11px; height: 11px; }
.color-tools { display: flex; gap: 6px; }
.pal .icon + .icon { margin-left: 2px; }
.wheel {
  display: grid;
  flex: none;
  place-items: center;
  width: 141px;
  height: 147px;
  margin-right: 2px;
  border-radius: 50%;
  background: radial-gradient(closest-side, #fff, rgba(255, 255, 255, 0)), conic-gradient(from 90deg, #f00, #ff0, #0f0, #0ff, #00f, #f0f, #f00);
}
.marker { width: 9px; height: 9px; border: 1px solid #222; border-radius: 50%; background: #fff; }
.swatches { display: grid; grid-template-columns: repeat(16, 12px); grid-auto-rows: 12px; margin: 4px 8px 0; }

.cursor { position: absolute; right: 119px; bottom: 135px; width: 16px; height: 16px; }

.status { display: flex; align-items: center; flex: none; height: 26px; padding: 0 18px 1px 1px; }
.hint { flex: 1; white-space: nowrap; }
.s-size { width: 94px; margin-left: 2px; }
.s-pos { width: 94px; margin-left: 2px; }
.s-zoom { width: 42px; }
.unit { width: 39px; justify-content: flex-start; gap: 6px; }
.fit { margin-right: 13px; }
.zoom { appearance: none; width: 88px; height: 16px; margin: 0 9px; background: linear-gradient(#999, #999) 0 50% / 100% 1px no-repeat; }
.zoom::-webkit-slider-thumb {
  appearance: none;
  width: 10px;
  height: 16px;
  border: 1px solid #777;
  border-radius: 1px 1px 5px 5px;
  background: #eee;
}
</style>
